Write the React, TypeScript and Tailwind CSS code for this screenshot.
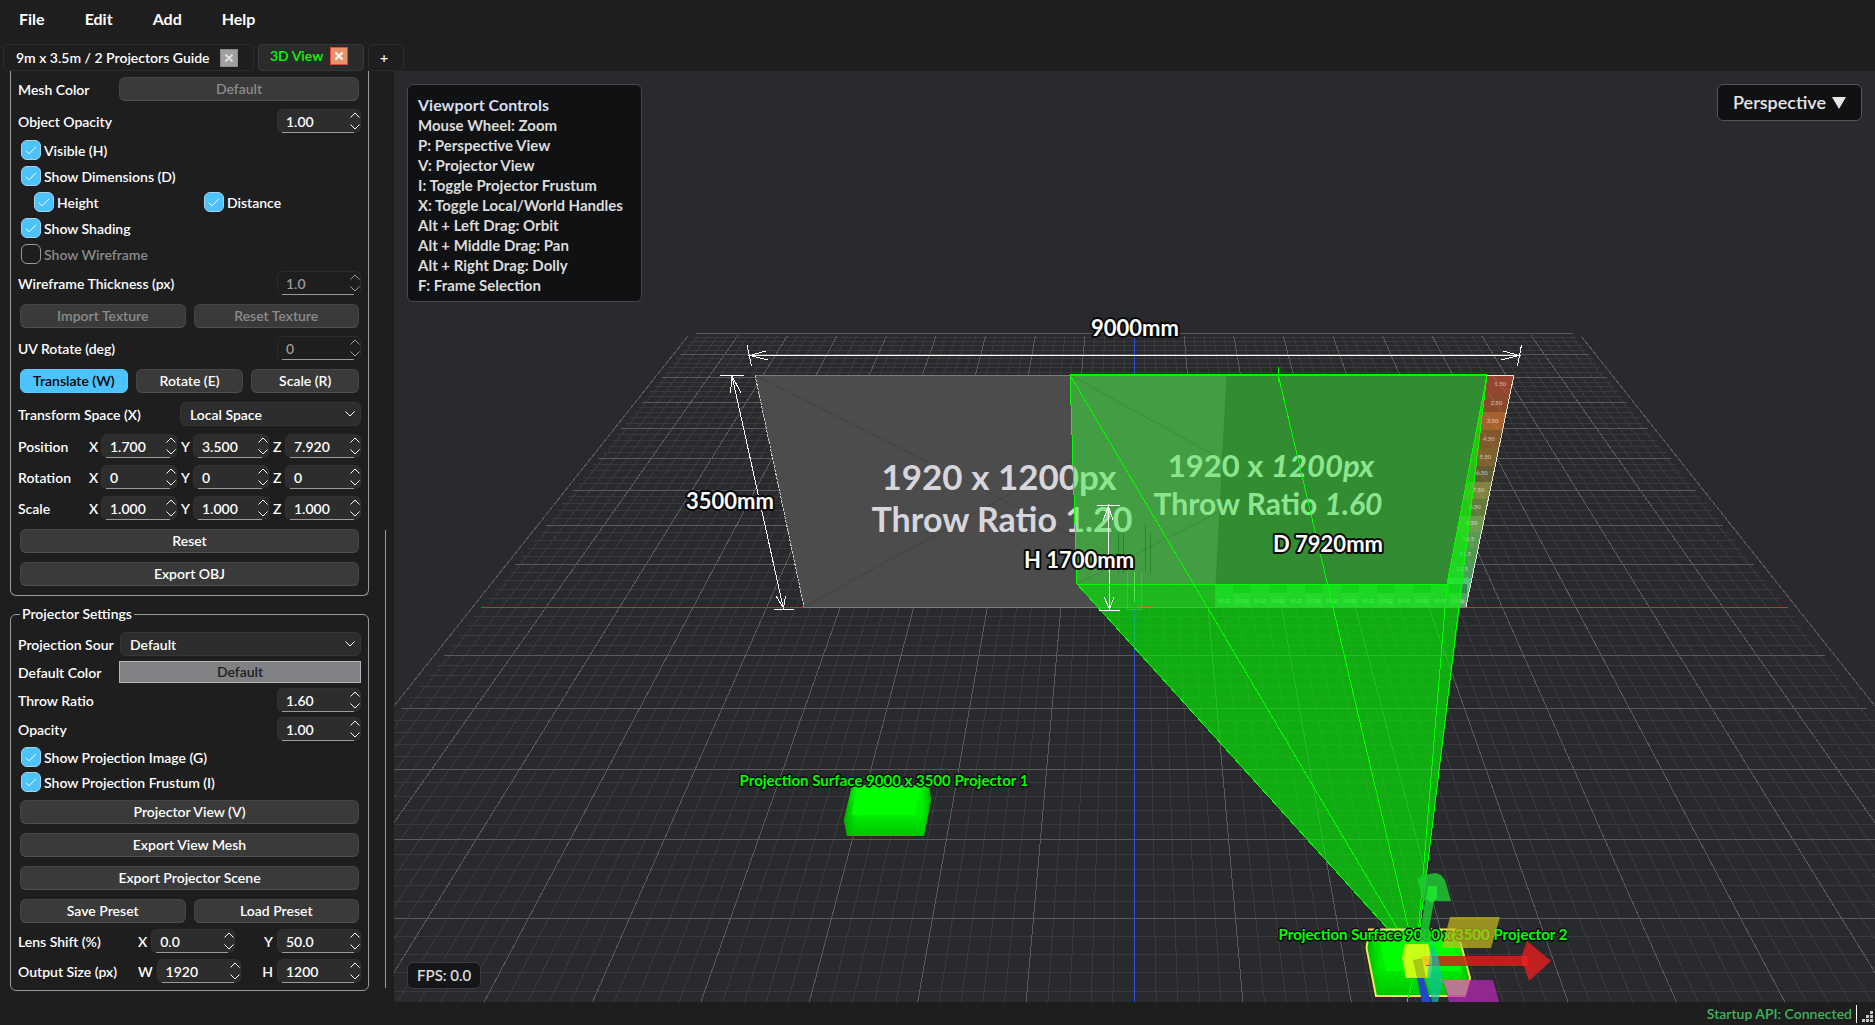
import { useId, useState } from "react";
import type { ReactNode } from "react";
import clsx from "clsx";

const Chevron = ({ up = false, className = "" }: { up?: boolean; className?: string }) => (
  <svg viewBox="0 0 10 6" className={clsx("h-1.5 w-2.5", className)} fill="none" stroke="currentColor">
    <path d={up ? "M0.5 5.5 L5 1 L9.5 5.5" : "M0.5 0.5 L5 5 L9.5 0.5"} />
  </svg>
);

type SpinProps = { value: string; label: string; disabled?: boolean; id?: string; className?: string };

const Spin = ({ value, label, disabled, id, className }: SpinProps) => {
  const [text, setText] = useState(value);
  return (
    <div
      className={clsx(
        "flex h-6 min-w-0 flex-col rounded-md border border-b-0",
        disabled ? "border-[#2b2b2b] text-[#9a9a9a]" : "border-[#323232] bg-[#2d2d2d] text-white",
        className,
      )}
    >
      <div className="flex min-h-0 flex-1">
        <input
          id={id}
          aria-label={label}
          value={text}
          disabled={disabled}
          onChange={(e) => setText(e.target.value)}
          className="w-0 flex-1 bg-transparent pl-2 outline-none"
        />
        <div className="flex flex-col justify-between py-0.5">
          <button type="button" aria-label={`Increase ${label}`} disabled={disabled}>
            <Chevron up className="block" />
          </button>
          <button type="button" aria-label={`Decrease ${label}`} disabled={disabled}>
            <Chevron className="block" />
          </button>
        </div>
      </div>
      <div className="mr-1.5 ml-1 h-px bg-[#9a9a9a]" />
    </div>
  );
};

const SpinRow = ({ label, value, disabled }: { label: string; value: string; disabled?: boolean }) => {
  const id = useId();
  return (
    <div className="flex items-center justify-between">
      <label htmlFor={id}>{label}</label>
      <Spin id={id} label={label} value={value} disabled={disabled} className="w-[84px]" />
    </div>
  );
};

const Check = ({ label, on = true, disabled }: { label: string; on?: boolean; disabled?: boolean }) => {
  const [checked, setChecked] = useState(on);
  return (
    <label className={clsx("flex h-5 items-center gap-[3px]", disabled && "text-[#8b8b8b]")}>
      <span className="grid size-5 place-items-center">
        <input
          type="checkbox"
          checked={checked}
          disabled={disabled}
          onChange={(e) => setChecked(e.target.checked)}
          className="col-start-1 row-start-1 size-5 appearance-none rounded-md border border-[#9a9a9a] checked:border-[#a9d3e8] checked:bg-[#4cc2ff]"
        />
        {checked && (
          <svg viewBox="0 0 12 9" className="pointer-events-none col-start-1 row-start-1 h-[9px] w-3" fill="none" stroke="#fff">
            <path d="M0.8 4.6 L4 7.8 L11 0.8" />
          </svg>
        )}
      </span>
      {label}
    </label>
  );
};

const Btn = ({ children, active, disabled }: { children: ReactNode; active?: boolean; disabled?: boolean }) => (
  <button
    type="button"
    disabled={disabled}
    className={clsx(
      "h-6 min-w-0 flex-1 rounded-md border leading-5",
      active
        ? "border-[#58c6ff] bg-[#4cc2ff] text-black"
        : "border-[#454545] border-b-[#505050] bg-[#3a3a3a] text-white disabled:text-[#8b8b8b]",
    )}
  >
    {children}
  </button>
);

const BtnRow = ({ children }: { children: ReactNode }) => <div className="mx-0.5 flex gap-2 pt-px">{children}</div>;

const Select = ({ id, options, className }: { id: string; options: string[]; className?: string }) => (
  <div className={clsx("grid items-center", className)}>
    <select
      id={id}
      className="col-start-1 row-start-1 h-6 w-full appearance-none rounded-md border border-[#363636] bg-[#2d2d2d] pr-6 pl-[9px] text-white outline-none"
    >
      {options.map((o) => (
        <option key={o}>{o}</option>
      ))}
    </select>
    <Chevron className="pointer-events-none col-start-1 row-start-1 mr-1.5 justify-self-end" />
  </div>
);

const AxisRow = ({ label, values }: { label: string; values: string[] }) => (
  <div className="flex items-center">
    <span className="w-[71px]">{label}</span>
    <div className="flex flex-1 gap-1">
      {["X", "Y", "Z"].map((axis, i) => (
        <label key={axis} className="flex flex-1 items-center">
          <span className="w-3">{axis}</span>
          <Spin label={`${label} ${axis}`} value={values[i]} className="flex-1" />
        </label>
      ))}
    </div>
  </div>
);

const PairRow = ({ label, fields }: { label: string; fields: [string, string][] }) => (
  <div className="flex items-center">
    <span className="w-[120px]">{label}</span>
    <div className="flex flex-1 justify-between">
      {fields.map(([name, value]) => (
        <label key={name} className="flex items-center">
          <span className="pr-1">{name}</span>
          <Spin label={`${label} ${name}`} value={value} className="w-[84px]" />
        </label>
      ))}
    </div>
  </div>
);

const Sidebar = () => (
  <aside className="flex w-[394px] shrink-0 overflow-hidden pl-2.5">
    <div className="w-[359px]">
      <section className="flex flex-col gap-2 rounded-b-md border border-t-0 border-[#9a9a9a] px-[7px] pt-1.5 pb-[9px]">
        <div className="flex items-center">
          <span className="w-[99px]">Mesh Color</span>
          <div className="mx-0.5 flex flex-1">
            <Btn disabled>Default</Btn>
          </div>
        </div>
        <SpinRow label="Object Opacity" value="1.00" />
        <div className="-my-px flex flex-col gap-1.5 pl-[3px]">
          <Check label="Visible (H)" />
          <Check label="Show Dimensions (D)" />
          <div className="flex pl-[13px]">
            <div className="w-[170px]">
              <Check label="Height" />
            </div>
            <Check label="Distance" />
          </div>
          <Check label="Show Shading" />
          <Check label="Show Wireframe" on={false} disabled />
        </div>
        <SpinRow label="Wireframe Thickness (px)" value="1.0" disabled />
        <BtnRow>
          <Btn disabled>Import Texture</Btn>
          <Btn disabled>Reset Texture</Btn>
        </BtnRow>
        <SpinRow label="UV Rotate (deg)" value="0" disabled />
        <BtnRow>
          <Btn active>Translate (W)</Btn>
          <Btn>Rotate (E)</Btn>
          <Btn>Scale (R)</Btn>
        </BtnRow>
        <div className="flex items-center justify-between pt-px">
          <label htmlFor="space">Transform Space (X)</label>
          <Select id="space" options={["Local Space", "World Space"]} className="w-[181px]" />
        </div>
        <div className="flex flex-col gap-[7px]">
          <AxisRow label="Position" values={["1.700", "3.500", "7.920"]} />
          <AxisRow label="Rotation" values={["0", "0", "0"]} />
          <AxisRow label="Scale" values={["1.000", "1.000", "1.000"]} />
        </div>
        <BtnRow>
          <Btn>Reset</Btn>
        </BtnRow>
        <BtnRow>
          <Btn>Export OBJ</Btn>
        </BtnRow>
      </section>

      <fieldset className="mt-2 rounded-md border border-[#9a9a9a] px-[7px] pt-2 pb-[7px]">
        <legend className="ml-0.5 px-0.5 leading-5">Projector Settings</legend>
        <div className="flex flex-col gap-[5px]">
          <div className="flex items-center">
            <label htmlFor="source" className="w-[102px] overflow-hidden whitespace-nowrap">
              Projection Sour
            </label>
            <Select id="source" options={["Default"]} className="flex-1" />
          </div>
          <div className="flex items-center">
            <span className="w-[101px]">Default Color</span>
            <button type="button" className="h-[22px] flex-1 border border-[#b4b6b8] bg-[#7f8184] leading-5 text-[#1e1e1e]">
              Default
            </button>
          </div>
          <SpinRow label="Throw Ratio" value="1.60" />
          <SpinRow label="Opacity" value="1.00" />
          <div className="flex flex-col gap-[5px] pt-px pl-[3px]">
            <Check label="Show Projection Image (G)" />
            <Check label="Show Projection Frustum (I)" />
          </div>
        </div>
        <div className="flex flex-col gap-2 pt-[7px] pb-1.5">
          <BtnRow>
            <Btn>Projector View (V)</Btn>
          </BtnRow>
          <BtnRow>
            <Btn>Export View Mesh</Btn>
          </BtnRow>
          <BtnRow>
            <Btn>Export Projector Scene</Btn>
          </BtnRow>
          <BtnRow>
            <Btn>Save Preset</Btn>
            <Btn>Load Preset</Btn>
          </BtnRow>
        </div>
        <div className="flex flex-col gap-1.5">
          <PairRow label="Lens Shift (%)" fields={[["X", "0.0"], ["Y", "50.0"]]} />
          <PairRow label="Output Size (px)" fields={[["W", "1920"], ["H", "1200"]]} />
        </div>
      </fieldset>
    </div>
    <div className="ml-4 flex flex-col justify-end pb-3.5">
      <div className="h-1/2 w-px bg-[#9a9a9a]" />
    </div>
  </aside>
);

// Ground grid, projected to the screen. One unit is one metre, five minor lines each.
const CX = 1134.5;
const groundY = (k: number) => -226 + 15305 / (18.37 - k);
const groundX = (i: number, k: number) => CX + (i * 1351) / (18.37 - k);

const Grid = () => {
  const minor: ReactNode[] = [];
  const major: ReactNode[] = [];
  for (let n = -45; n <= 45; n++) {
    const i = n / 5;
    const list = n % 5 === 0 ? major : minor;
    const y = groundY(i);
    if (i < 6.1) list.push(<line key={`h${n}`} x1={groundX(-8.88, i)} y1={y} x2={groundX(8.88, i)} y2={y} />);
    list.push(<line key={`v${n}`} x1={groundX(i, -8.88)} y1={groundY(-8.88)} x2={groundX(i, 8)} y2={groundY(8)} />);
  }
  return (
    <g shapeRendering="crispEdges">
      <g stroke="#3a3a3b">{minor}</g>
      <g stroke="#5a5a5b">{major}</g>
    </g>
  );
};

// Test pattern strip on the uncovered right side of the surface
const strip = ["#964530", "#8b4a2d", "#a5622f", "#805a2d", "#7d6230", "#645c33", "#7f8443", "#647a3c", "#6f9950", "#5a9a52", "#4b9a50", "#4d9c5c", "#55c07a"];
const stripLabels = ["1.50", "2.50", "3.50", "4.50", "5.50", "6.50", "7.50", "8.50", "9.50", "10.5", "11.5", "12.5", ""];
const stripY = [375, 393, 412, 430, 448, 466, 482, 499, 516, 532, 548, 563, 578, 607];
const surfaceRight = (y: number) => 1514 - ((y - 375) * 48) / 232;

const floorCells = Array.from({ length: 14 }, (_, i) => 1215 + i * 18);

const outline = { stroke: "#0a0a0a", strokeLinejoin: "round" as const, paintOrder: "stroke" };

const Scene = () => (
  <svg
    viewBox="394 71 1481 931"
    preserveAspectRatio="xMidYMid slice"
    className="block size-full font-['Lato',sans-serif] font-bold"
    fill="none"
  >
    <defs>
      <linearGradient id="boxFront" x1="0" y1="0" x2="0" y2="1">
        <stop offset="0.55" stopColor="#00f000" />
        <stop offset="1" stopColor="#00c400" />
      </linearGradient>
      <linearGradient id="boxShade" x1="0" y1="0" x2="1" y2="0">
        <stop offset="0" stopColor="#00a800" />
        <stop offset="0.15" stopColor="#00c800" stopOpacity="0" />
        <stop offset="0.9" stopColor="#00c800" stopOpacity="0" />
        <stop offset="1" stopColor="#00a800" />
      </linearGradient>
    </defs>

    <Grid />
    <g shapeRendering="crispEdges">
      <path d="M481 607.5 H1788" stroke="#c83232" />
      <path d="M1134.5 333 V1002" stroke="#3050e0" strokeWidth="1.5" />
    </g>

    {/* projection surface */}
    <path d="M755 375 L1227 375 L1215 607 L804 607 Z" fill="#4c4c4c" />
    <path d="M755 375 L1215 607 M804 607 L1227 375" stroke="#424242" />
    {strip.map((color, i) => {
      const [a, b] = [stripY[i], stripY[i + 1]];
      return (
        <g key={color}>
          <path d={`M${surfaceRight(a) - 60} ${a} H${surfaceRight(a)} L${surfaceRight(b)} ${b} H${surfaceRight(b) - 60} Z`} fill={color} />
          <path d={`M${surfaceRight(a) - 22} ${a} L${surfaceRight(b) - 4} ${b}`} stroke="#ffffff" strokeOpacity="0.12" />
          <text x={surfaceRight(b) - 10} y={b - 7} fontSize="6" textAnchor="middle" fill="#ffffff" fillOpacity="0.5">
            {stripLabels[i]}
          </text>
        </g>
      );
    })}
    {floorCells.map((x, i) => (
      <g key={x}>
        <rect x={x} y="584" width="18" height="9" fill={i % 2 ? "#32884a" : "#42a05a"} />
        <rect x={x} y="593" width="18" height="14" fill={i % 2 ? "#55a068" : "#489a60"} />
        <path d={`M${x} 593 l18 14`} stroke="#ffffff" strokeOpacity="0.15" />
        <text x={x + 9} y="603" fontSize="5" textAnchor="middle" fill="#ffffff" fillOpacity="0.5">
          {`14-${23 + i}`}
        </text>
      </g>
    ))}
    <path d="M1227 375 L1487 375 L1447 584 L1216 584 Z" fill="#2c2c2c" />
    <path d="M1227 375 L1216 584 L1447 584 M1070 375 L1447 584 M1077 584 L1487 375" stroke="#232323" strokeOpacity="0.6" />
    <g shapeRendering="crispEdges">
      <path d="M755 375.5 H1514 M804 607.5 H1466" stroke="#7c7c7c" />
      <path d="M755 375 L804 607" stroke="#c8c8c8" strokeDasharray="3 1" />
      <path d="M1514 375 L1466 607 M1487 375.5 H1514" stroke="#ece4dc" />
    </g>

    <g fill="#d6d6dc">
      <text x="999" y="490" fontSize="35" textAnchor="middle">1920 x 1200px</text>
      <text x="1002" y="532" fontSize="34" textAnchor="middle">Throw Ratio 1.20</text>
      <text x="1271" y="477" fontSize="31" textAnchor="middle">
        1920 x <tspan fontStyle="italic">1200px</tspan>
      </text>
      <text x="1268" y="515" fontSize="30" textAnchor="middle">
        Throw Ratio <tspan fontStyle="italic">1.60</tspan>
      </text>
    </g>

    {/* projected image, then the body of the frustum */}
    <path d="M1070 375 L1487 375 L1447 584 L1077 584 Z" fill="rgb(57,248,57)" fillOpacity="0.47" />
    <path d="M1487 375 L1460 607 L1416 960 L1077 584 L1447 584 Z" fill="rgb(4,250,2)" fillOpacity="0.62" />
    <g stroke="#00ff00" shapeRendering="crispEdges">
      <path d="M1070 374.5 H1487 M1077 584.5 H1447" />
      <path d="M1070 375 L1077 584 L1416 960 M1070 375 L1416 960 M1487 375 L1447 584 L1416 960 M1487 375 L1416 960" />
      <path d="M1278.5 367 V382 M1278.5 376 L1416 960" />
    </g>

    {/* small figure standing on the origin */}
    <g shapeRendering="crispEdges">
      <path d="M1118.5 533 V573 M1123.5 533 V573 M1145.5 525 V571 M1150.5 533 V573" stroke="#1d7a1d" strokeOpacity="0.7" />
      <path d="M1127.5 572 V609 H1141.5 V572" stroke="#4fc84f" strokeOpacity="0.6" />
      <path d="M1134.5 572 V602" stroke="#50e850" />
      <path d="M1142 606.5 H1154" stroke="#a07818" />
      <path d="M1131 611.5 H1138 M1131 615.5 H1138 M1132 619.5 H1137" stroke="#109a90" />
    </g>

    {/* dimension lines */}
    <g stroke="#ffffff" shapeRendering="crispEdges">
      <path d="M750 355.5 H1519" />
      <path d="M747 345 L751.5 366 M1521.5 345 L1517.5 366" />
      <path d="M766 351 L750 355.5 L768 360 M1503 351 L1519 355.5 L1501 360" />
      <path d="M720 375.5 H744 M774 609.5 H794 M732 376 L783.5 609" />
      <path d="M730.5 393 L732 376 L741 393 M776 596 L783.5 608 L785.5 596" />
      <path d="M1097 505.5 H1120 M1099 610.5 H1120 M1108.5 506 L1109.5 610" />
      <path d="M1103 521 L1108.5 506 L1113 520 M1104 597 L1109.5 609 L1114 597" />
    </g>

    {/* projector 1 */}
    <path d="M852 786 H929 L931 800 L924 836 H847 L844 820 Z" fill="url(#boxFront)" />
    <path d="M852 786 H929 L931 800 L924 836 H847 L844 820 Z" fill="url(#boxShade)" />
    <path d="M857 785 H921 L915 815 H852 Z" fill="#00ff00" />

    {/* projector 2, selected */}
    <path d="M1369 929 H1457 L1470 978 L1465 996 H1376 L1366 948 Z" fill="url(#boxFront)" />
    <path d="M1369 929 H1457 L1470 978 L1465 996 H1376 L1366 948 Z" fill="url(#boxShade)" />
    <path d="M1379 936 H1452 L1460 971 H1386 Z" fill="#00ff00" />
    <path d="M1369 929.5 H1457 L1470 978 L1465 996 H1376 L1366.5 948 Z" stroke="#f5e65a" strokeWidth="2" />
    <path d="M1412 982 L1407 1002" stroke="#00ff00" shapeRendering="crispEdges" />

    <g fontSize="15" fill="#00ff00" textAnchor="middle" strokeWidth="3" {...outline}>
      <text x="884" y="786">Projection Surface 9000 x 3500 Projector 1</text>
      <text x="1423" y="940">Projection Surface 9000 x 3500 Projector 2</text>
    </g>

    {/* move handles */}
    <path d="M1417 878 L1429 874 L1436 873 L1441 875 L1445 880 L1451 901 H1434 L1429 929 L1432 942 H1419 L1425 901 H1423 Z" fill="#1fc832" fillOpacity="0.85" />
    <path d="M1428 886 H1437 V898 L1432 903 L1426 899 Z" fill="#1ee030" />
    <path d="M1450 917 H1500 L1491 948 H1442 Z" fill="#c8be1e" fillOpacity="0.7" />
    <path d="M1443 980 H1493 L1499 1002 H1449 Z" fill="#b428b4" fillOpacity="0.75" />
    <path d="M1443 980 H1469 L1465 995 H1448 Z" fill="#ffb4a0" fillOpacity="0.4" />
    <path d="M1417 978 H1424 L1431 1002 H1422 Z" fill="#2048c8" />
    <path d="M1405 944 H1428 L1433 961 L1430 978 H1406 L1402 958 Z" fill="#c8ff18" />
    <path d="M1413 960 L1422 958 L1426 978 H1417 Z" fill="#a8c818" />
    <path d="M1424 956 H1524 V966 H1426 Z" fill="#d22018" fillOpacity="0.85" />
    <path d="M1422 956 H1432 V965 H1424 Z" fill="#f0c818" />
    <path d="M1432 940 L1438 956 L1443 982 L1438 1002 H1432 L1427 978 Z" fill="#14beb0" fillOpacity="0.65" />
    <path d="M1527 941 L1551 961 L1529 981 L1521 958 Z" fill="#c02020" />
    <path d="M1521 956 H1526 L1529 961 L1527 966 H1522 Z" fill="#e42020" />

    <g fontSize="22" fill="#ffffff" textAnchor="middle" strokeWidth="4" {...outline}>
      <text x="1135" y="336">9000mm</text>
      <text x="730" y="509">3500mm</text>
      <text x="1079" y="568">H 1700mm</text>
      <text x="1328" y="552">D 7920mm</text>
    </g>
  </svg>
);

const shortcuts = [
  "Mouse Wheel: Zoom",
  "P: Perspective View",
  "V: Projector View",
  "I: Toggle Projector Frustum",
  "X: Toggle Local/World Handles",
  "Alt + Left Drag: Orbit",
  "Alt + Middle Drag: Pan",
  "Alt + Right Drag: Dolly",
  "F: Frame Selection",
];

const Viewport = () => (
  <main className="relative min-w-0 flex-1 overflow-hidden bg-[#292a2d]">
    <div className="absolute inset-0">
      <Scene />
    </div>
    <div className="absolute top-[13px] left-[13px] rounded-md border border-[#47484a] bg-[#101113] px-2.5 pt-[9px] pb-1.5 text-[15px] leading-5 font-bold text-[#dcdcdc]">
      <h2 className="text-[16px] leading-[21px] text-[#d4dff0]">Viewport Controls</h2>
      <ul className="pr-2">
        {shortcuts.map((s) => (
          <li key={s}>{s}</li>
        ))}
      </ul>
    </div>
    <button
      type="button"
      className="absolute top-[13px] right-[13px] flex h-[37px] items-center gap-1.5 rounded-md border border-[#55565a] bg-[#101113] px-[15px] text-[18px] text-[#e6e6e6]"
    >
      Perspective
      <svg viewBox="0 0 14 12" className="h-3 w-3.5" fill="currentColor">
        <path d="M0 0 H14 L7 12 Z" />
      </svg>
    </button>
    <div className="absolute bottom-[13px] left-[13px] flex h-[27px] items-center rounded-md border border-[#3c3d40] bg-[#151618] px-[9px] text-[15px] text-[#dcdcdc]">
      FPS: 0.0
    </div>
  </main>
);

const CloseBox = ({ active }: { active?: boolean }) => (
  <button
    type="button"
    aria-label="Close tab"
    className={clsx(
      "grid size-[18px] place-items-center border",
      active ? "border-[#e0493a] bg-[#e8926a]" : "border-[#8c8c8c] bg-[#a0a0a0]",
    )}
  >
    <svg viewBox="0 0 8 8" className="size-2" stroke={active ? "#fff" : "#e0e0e0"} strokeWidth="2">
      <path d="M0.5 0.5 L7.5 7.5 M7.5 0.5 L0.5 7.5" />
    </svg>
  </button>
);

const App = () => (
  <div className="flex h-screen flex-col bg-[#1e1e1e] font-['Lato',sans-serif] text-[14px] font-semibold text-white">
    <nav className="flex h-11 items-start gap-10 px-[19px] pt-2 text-[16px] leading-[22px] font-bold">
      {["File", "Edit", "Add", "Help"].map((m) => (
        <button key={m} type="button">
          {m}
        </button>
      ))}
    </nav>

    <div className="flex h-[27px] gap-1 pl-[3px]">
      <div className="flex w-[251px] items-center justify-between rounded-sm border border-[#2b2b2b] pr-[15px] pl-3">
        <button type="button">9m x 3.5m / 2 Projectors Guide</button>
        <CloseBox />
      </div>
      <div className="flex w-[106px] items-center justify-between rounded-sm border border-[#383838] bg-[#2b2b2b] pr-[15px] pb-1 pl-[11px]">
        <button type="button" className="text-[#00ff00]">
          3D View
        </button>
        <CloseBox active />
      </div>
      <button type="button" aria-label="New tab" className="w-9 rounded-sm border border-[#2b2b2b] pr-1">
        +
      </button>
    </div>

    <div className="flex min-h-0 flex-1">
      <Sidebar />
      <Viewport />
    </div>

    <footer className="flex h-[23px] items-center justify-end gap-1 pr-0.5 text-[#3fb45c]">
      Startup API: Connected
      <span className="h-[18px] w-px bg-white" />
      <svg viewBox="0 0 12 12" className="mt-1.5 size-3" fill="#c8c8c8" shapeRendering="crispEdges">
        <path d="M9 0h3v3h-3z M5 4h3v3h-3z M9 4h3v3h-3z M1 8h3v3h-3z M5 8h3v3h-3z M9 8h3v3h-3z" />
      </svg>
    </footer>
  </div>
);

export default App;
